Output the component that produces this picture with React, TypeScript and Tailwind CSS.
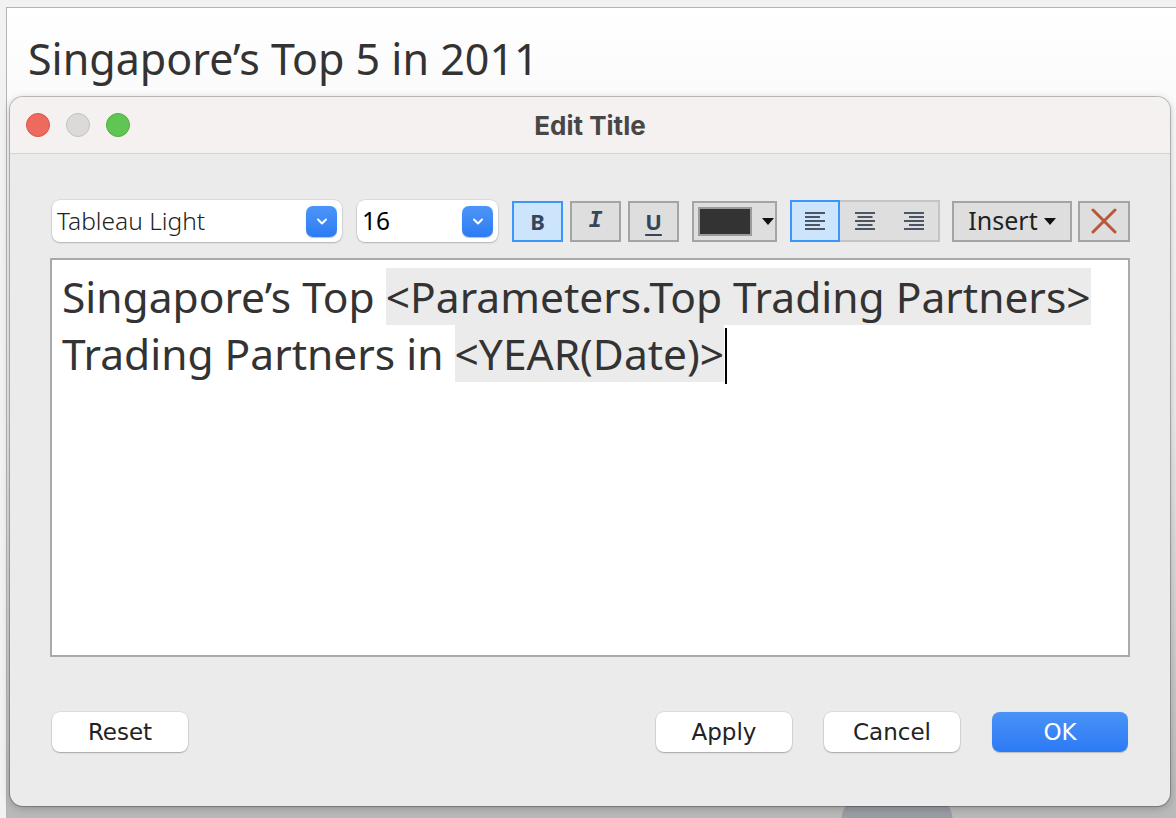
import React from "react";

const TABLEAU = { fontFamily: '"Noto Sans", "Open Sans", sans-serif' };
const LUCIDA = { fontFamily: '"DejaVu Sans", "Liberation Sans", sans-serif' };
const SYSTEM = { fontFamily: 'Inter, "Liberation Sans", sans-serif' };

function Chevron() {
  return (
    <span className="flex h-[31px] w-[31px] items-center justify-center rounded-[7px] bg-gradient-to-b from-[#4c95f7] to-[#2c7bf5] shadow-[0_0.5px_1px_rgba(0,0,0,0.25)]">
      <svg width="14" height="10" viewBox="0 0 14 10" aria-hidden="true">
        <path d="M3 3.5 L7 7.5 L11 3.5" fill="none" stroke="white" strokeWidth="2" strokeLinecap="round" strokeLinejoin="round" />
      </svg>
    </span>
  );
}

function Select({ label, width, black }: { label: string; width: string; black?: boolean }) {
  return (
    <div
      className={`flex h-[42px] ${width} items-center justify-between rounded-[8px] bg-white pr-[5px] pl-[5px] shadow-[0_0_0_0.5px_rgba(0,0,0,0.12),0_1px_2px_rgba(0,0,0,0.2)]`}
    >
      <span className={`text-[24.5px] ${black ? "font-normal text-black" : "font-light text-[#222]"}`} style={TABLEAU}>
        {label}
      </span>
      <Chevron />
    </div>
  );
}

function Caret() {
  return (
    <svg width="12" height="7" viewBox="0 0 12 7" aria-hidden="true">
      <path d="M0 0 H12 L6 7 Z" fill="#111" />
    </svg>
  );
}

function AlignIcon({ kind }: { kind: "left" | "center" | "right" }) {
  const rows = [20, 15, 20, 15, 20];
  return (
    <svg width="22" height="20" viewBox="0 0 22 20" aria-hidden="true">
      {rows.map((w, i) => {
        const x = kind === "left" ? 1 : kind === "right" ? 21 - w : (22 - w) / 2;
        return <rect key={i} x={x} y={1 + i * 4} width={w} height="2" fill="#4b5563" />;
      })}
    </svg>
  );
}

function DialogButton({ children, primary }: { children: React.ReactNode; primary?: boolean }) {
  return (
    <button
      type="button"
      className={`flex h-[40px] w-[136px] items-center justify-center rounded-[8px] text-[23px] ${
        primary
          ? "bg-gradient-to-b from-[#4a92f7] to-[#2b7af5] text-white shadow-[0_0.5px_1px_rgba(0,0,0,0.2)]"
          : "bg-white text-[#222] shadow-[0_0_0_0.5px_rgba(0,0,0,0.12),0_1px_1.5px_rgba(0,0,0,0.25)]"
      }`}
      style={LUCIDA}
    >
      {children}
    </button>
  );
}

export default function App() {
  return (
    <div className="relative h-[818px] w-[1176px] overflow-hidden bg-[#f2f2f2]">
      {/* the worksheet behind the dialog */}
      <div className="absolute top-[7px] left-[6px] h-[811px] w-[1170px] border-t border-l border-[#b4b4b4] bg-gradient-to-b from-white via-[#ececec] to-[#b9b9b9]">
        <h1 className="pt-[24px] pl-[21px] text-[43px] leading-[54px] text-[#333]" style={TABLEAU}>
          Singapore’s Top 5 in 2011
        </h1>
        <div className="absolute bottom-[-40px] left-[834px] h-[70px] w-[112px] rounded-[40px] bg-[#9a9da3]" />
      </div>

      {/* Edit Title dialog */}
      <div className="absolute top-[97px] left-[10px] flex h-[709px] w-[1160px] flex-col overflow-hidden rounded-[13px] bg-[#ebebeb] shadow-[0_0_0_1px_rgba(0,0,0,0.22),0_2px_8px_rgba(0,0,0,0.25)]">
        <div className="relative flex h-[57px] shrink-0 items-center border-b border-[#d3d3d3] bg-[#f4f1f0] pl-[16px]">
          <div className="flex gap-[16px]">
            <span className="h-[24px] w-[24px] rounded-full border border-[#d9534b] bg-[#ee6a5f]" />
            <span className="h-[24px] w-[24px] rounded-full border border-[#c4c2c1] bg-[#dcdad9]" />
            <span className="h-[24px] w-[24px] rounded-full border border-[#4fae43] bg-[#61c554]" />
          </div>
          <div className="absolute inset-0 flex items-center justify-center">
            <span className="text-[26px] font-bold text-[#474747]" style={SYSTEM}>
              Edit Title
            </span>
          </div>
        </div>

        <div className="flex flex-1 flex-col px-[40px] pt-[46px]">
          {/* toolbar */}
          <div className="flex items-center pl-[2px]">
            <Select label="Tableau Light" width="w-[290px]" />
            <div className="ml-[15px]">
              <Select label="16" width="w-[141px]" black />
            </div>
            <div className="ml-[14px] flex h-[41px] w-[51px] items-center justify-center border-2 border-[#3a96fb] bg-[#cde5fc]">
              <span className="text-[22px] font-bold text-[#36455a]" style={TABLEAU}>B</span>
            </div>
            <div className="ml-[7px] flex h-[41px] w-[51px] items-center justify-center border-2 border-[#a4a4a4] bg-[#dedede]">
              <span className="text-[23px] font-bold text-[#36455a] italic" style={{ fontFamily: '"Liberation Mono", monospace' }}>I</span>
            </div>
            <div className="ml-[7px] flex h-[41px] w-[51px] items-center justify-center border-2 border-[#a4a4a4] bg-[#dedede]">
              <span className="text-[22px] font-bold text-[#36455a] underline decoration-2 underline-offset-[4px]" style={TABLEAU}>U</span>
            </div>
            <div className="ml-[13px] flex h-[41px] w-[85px] items-center gap-[10px] border-2 border-[#a4a4a4] bg-[#dedede] pl-[4px]">
              <span className="h-[29px] w-[54px] border-2 border-[#9b9b9b] bg-[#333]" />
              <Caret />
            </div>
            <div className="ml-[13px] flex h-[42px] w-[150px] border-2 border-[#c4c4c4] bg-[#dedede]">
              <div className="-mt-[2px] -ml-[2px] flex h-[42px] w-[50px] items-center justify-center border-2 border-[#3a96fb] bg-[#cde5fc]">
                <AlignIcon kind="left" />
              </div>
              <div className="flex w-[50px] items-center justify-center">
                <AlignIcon kind="center" />
              </div>
              <div className="flex w-[48px] items-center justify-center">
                <AlignIcon kind="right" />
              </div>
            </div>
            <div className="ml-[12px] flex h-[41px] w-[120px] items-center justify-center gap-[6px] border-2 border-[#a4a4a4] bg-[#dedede]">
              <span className="text-[25px] text-[#222]" style={TABLEAU}>Insert</span>
              <Caret />
            </div>
            <div className="ml-[6px] flex h-[41px] w-[52px] items-center justify-center border-2 border-[#a4a4a4] bg-[#dedede]">
              <svg width="26" height="26" viewBox="0 0 26 26" aria-hidden="true">
                <path d="M2 2 L24 24 M24 2 L2 24" stroke="#b8573a" strokeWidth="3" strokeLinecap="round" />
              </svg>
            </div>
          </div>

          {/* editor */}
          <div className="mt-[16px] h-[399px] border-2 border-[#a9a9a9] bg-white px-[10px] pt-[8px]">
            <p className="text-[42.5px] leading-[57px] text-[#333]" style={TABLEAU}>
              Singapore’s Top <span className="bg-[#ebebeb]">&lt;Parameters.Top Trading Partners&gt;</span>
              <br />
              Trading Partners in <span className="bg-[#ebebeb]">&lt;YEAR(Date)&gt;</span>
              <span className="relative top-[2px] ml-[1px] inline-block h-[56px] w-[2px] bg-black align-bottom" />
            </p>
          </div>

          {/* footer */}
          <div className="mt-[55px] flex items-center pl-[2px]">
            <DialogButton>Reset</DialogButton>
            <div className="ml-auto flex gap-[32px] pr-[2px]">
              <DialogButton>Apply</DialogButton>
              <DialogButton>Cancel</DialogButton>
              <DialogButton primary>OK</DialogButton>
            </div>
          </div>
        </div>
      </div>
    </div>
  );
}
